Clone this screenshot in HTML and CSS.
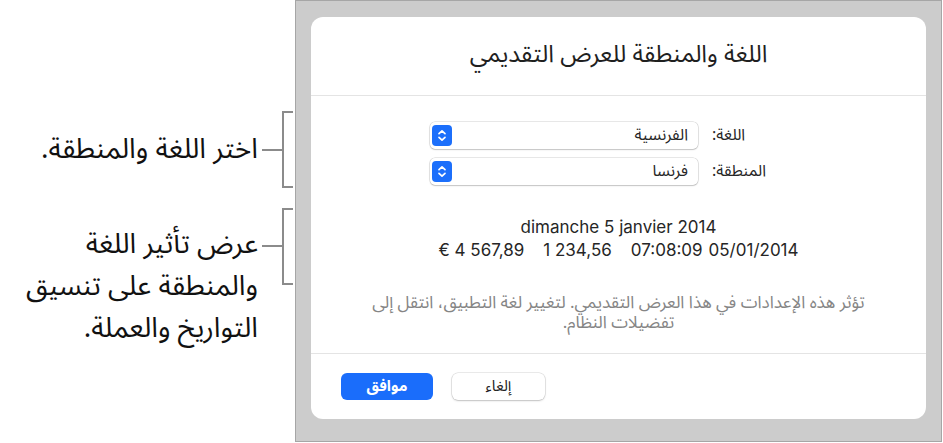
FILE: index.html
```html
<!DOCTYPE html>
<html lang="ar">
<head>
<meta charset="utf-8">
<title>اللغة والمنطقة للعرض التقديمي</title>
<link rel="stylesheet" href="styles.css">
</head>
<body>
<div class="page">
  <div class="annots">
    <div class="note note-one">
      <p class="note-text" dir="rtl">اختر اللغة والمنطقة.</p>
      <span class="connector"></span>
      <span class="bracket"></span>
    </div>
    <div class="note note-two">
      <p class="note-text" dir="rtl">عرض تأثير اللغة<br>والمنطقة على تنسيق<br>التواريخ والعملة.</p>
      <span class="connector"></span>
      <span class="bracket"></span>
    </div>
  </div>
  <div class="frame">
    <div class="dialog" dir="rtl">
      <div class="dialog-head">
        <h1 class="title">اللغة والمنطقة للعرض التقديمي</h1>
      </div>
      <div class="dialog-body">
        <div class="form">
          <span class="label">اللغة:</span>
          <div class="popup">
            <span class="popup-value">الفرنسية</span>
            <span class="stepper"><svg width="20" height="21" viewBox="0 0 20 21"><path d="M7 8.6 L10 5.8 L13 8.6 M7 12.4 L10 15.2 L13 12.4" fill="none" stroke="#fff" stroke-width="1.7" stroke-linecap="round" stroke-linejoin="round"/></svg></span>
          </div>
          <span class="label">المنطقة:</span>
          <div class="popup">
            <span class="popup-value">فرنسا</span>
            <span class="stepper"><svg width="20" height="21" viewBox="0 0 20 21"><path d="M7 8.6 L10 5.8 L13 8.6 M7 12.4 L10 15.2 L13 12.4" fill="none" stroke="#fff" stroke-width="1.7" stroke-linecap="round" stroke-linejoin="round"/></svg></span>
          </div>
        </div>
        <div class="sample" dir="ltr">
          <div class="sample-line">dimanche 5 janvier 2014</div>
          <div class="sample-line sample-row">
            <span class="cur">€&nbsp;4&nbsp;567,89</span>
            <span class="num">1&nbsp;234,56</span>
            <span class="time">07:08:09</span>
            <span class="date">05/01/2014</span>
          </div>
        </div>
        <p class="hint">تؤثر هذه الإعدادات في هذا العرض التقديمي. لتغيير لغة التطبيق، انتقل إلى<br>تفضيلات النظام.</p>
      </div>
      <div class="dialog-foot">
        <button class="btn btn-cancel" type="button">إلغاء</button>
        <button class="btn btn-ok" type="button">موافق</button>
      </div>
    </div>
  </div>
</div>
</body>
</html>
```
FILE: styles.css
```css
* { box-sizing: border-box; }
html, body { margin: 0; padding: 0; background: #fff; }
body {
  width: 943px;
  height: 443px;
  overflow: hidden;
  font-family: "Noto Sans Arabic", "DejaVu Sans", "Noto Sans", sans-serif;
  color: #1d1d1f;
}
.page {
  display: flex;
  width: 943px;
  height: 443px;
}

/* annotations */
.annots {
  width: 295px;
  flex: none;
  padding-top: 111px;
  padding-right: 2px;
  display: flex;
  flex-direction: column;
  gap: 20px;
}
.note {
  display: flex;
  justify-content: flex-end;
  align-items: center;
  direction: ltr;
}
.note-text {
  margin: 0 4px 0 0;
  font-size: 28px;
  line-height: 41px;
  color: #111;
  text-align: right;
  white-space: nowrap;
}
.connector {
  width: 20px;
  height: 2px;
  background: #8b8b8b;
  flex: none;
}
.bracket {
  width: 11px;
  height: 77px;
  border: 2px solid #8b8b8b;
  border-right: 0;
  flex: none;
}
.note-two { align-items: flex-start; }
.note-two .note-text { margin-top: 16px; line-height: 42px; }
.note-two .connector { margin-top: 37px; }

/* frame */
.frame {
  width: 647px;
  height: 442px;
  flex: none;
  background: #cccccc;
  border: 1px solid #a6a6a6;
  padding: 16px 15px 0 15px;
}
.dialog {
  width: 615px;
  height: 402px;
  background: #fff;
  border-radius: 12px;
  display: flex;
  flex-direction: column;
}
.dialog-head {
  height: 79px;
  border-bottom: 1px solid #e4e4e4;
  display: flex;
  align-items: center;
  justify-content: center;
  padding-bottom: 3px;
}
.title {
  margin: 0;
  font-size: 24px;
  line-height: 32px;
  font-weight: 400;
  color: #1f1f1f;
}
.dialog-body {
  height: 258px;
  border-bottom: 1px solid #e4e4e4;
  padding-top: 26px;
}
.form {
  display: grid;
  grid-template-columns: auto 268px;
  grid-auto-rows: 27px;
  column-gap: 14px;
  row-gap: 9px;
  align-items: center;
  justify-items: end;
  width: max-content;
  margin-left: 119px;
  margin-right: auto;
}
.label {
  font-size: 16px;
  line-height: 27px;
  color: #262626;
}
.popup {
  width: 268px;
  height: 27px;
  background: #fff;
  border-radius: 5px;
  box-shadow: 0 0 0 0.5px rgba(0,0,0,0.18), 0 1px 1.5px rgba(0,0,0,0.16);
  display: flex;
  align-items: center;
  justify-content: space-between;
  padding: 0 10px 0 2px;
}
.popup-value {
  font-size: 16px;
  line-height: 27px;
  color: #262626;
}
.stepper {
  width: 20px;
  height: 21px;
  border-radius: 4px;
  background: #1c6ffb;
  display: flex;
}
.sample {
  margin-top: 31px;
  font-family: Inter, Roboto, "Liberation Sans", sans-serif;
  font-size: 17px;
  line-height: 23px;
  color: #262626;
  text-align: center;
}
.sample-row {
  display: flex;
  justify-content: center;
}
.sample-row .num { margin-left: 19px; }
.sample-row .time { margin-left: 19px; }
.sample-row .date { margin-left: 6px; }
.hint {
  margin: 31px 0 0;
  font-size: 17px;
  line-height: 20px;
  color: #858585;
  text-align: center;
}
.dialog-foot {
  flex: 1;
  display: flex;
  justify-content: flex-end;
  align-items: flex-start;
  gap: 19px;
  padding: 19px 0 0 30px;
}
.btn {
  width: 93px;
  height: 27px;
  border: 0;
  border-radius: 6px;
  font-family: "Noto Sans Arabic", "DejaVu Sans", sans-serif;
  font-size: 15px;
  line-height: 27px;
  padding: 0;
}
.btn-cancel {
  background: #fff;
  color: #222;
  box-shadow: 0 0 0 0.5px rgba(0,0,0,0.16), 0 1px 2px rgba(0,0,0,0.18);
}
.btn-ok {
  width: 92px;
  background: #1a6dfb;
  color: #fff;
  font-weight: 700;
}
```
